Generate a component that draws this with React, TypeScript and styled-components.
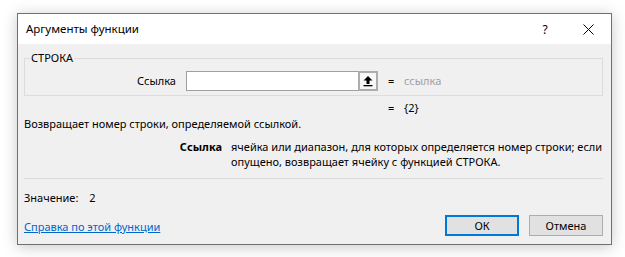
import styled, { createGlobalStyle } from "styled-components";

const GlobalStyle = createGlobalStyle`
    html, body {
        margin: 0;
        padding: 0;
        background: #ffffff;
    }
    body {
        font-family: "Noto Sans", "Liberation Sans", sans-serif;
        font-size: 11px;
        color: #000000;
    }
`;

const Page = styled.div`
    padding: 13px 0 0 17px;
    width: 625px;
    height: 257px;
    box-sizing: border-box;
`;

const Dialog = styled.div`
    width: 595px;
    height: 232px;
    box-sizing: border-box;
    border: 1px solid #707070;
    background: #f0f0f0;
    box-shadow: 0 2px 14px rgba(0, 0, 0, 0.22);
    display: flex;
    flex-direction: column;
`;

const TitleBar = styled.div`
    height: 30px;
    background: #ffffff;
    display: flex;
    align-items: center;
    padding-left: 8px;
`;

const Title = styled.div`
    flex: 1;
    font-size: 11.5px;
    line-height: 16px;
`;

const TitleButton = styled.div<{ $width: number }>`
    width: ${(p) => p.$width}px;
    height: 30px;
    font-size: 12px;
    display: flex;
    align-items: center;
    justify-content: center;
`;

const Body = styled.div`
    flex: 1;
    padding: 6px 8px 0 6px;
    display: flex;
    flex-direction: column;
`;

const Group = styled.fieldset`
    margin: 0;
    padding: 5px 0 4px 0;
    border: 1px solid #dcdcdc;
    min-width: 0;
`;

const Legend = styled.legend`
    padding: 0 1px;
    margin-left: 5px;
    line-height: 16px;
`;

const ArgGrid = styled.div<{ $first: number }>`
    display: grid;
    grid-template-columns: ${(p) => p.$first}px 192px 6px 1fr;
    column-gap: 10px;
    align-items: center;
    line-height: 16px;
`;

const ArgLabel = styled.div`
    text-align: right;
`;

const InputBox = styled.div`
    height: 20px;
    box-sizing: border-box;
    border: 1px solid #a0a0a0;
    background: #ffffff;
    display: flex;
    justify-content: flex-end;
`;

const PickButton = styled.div`
    width: 20px;
    height: 20px;
    margin: -1px -1px -1px 0;
    box-sizing: border-box;
    border: 2px solid #adadad;
    background: #f7f7f7;
    display: flex;
    align-items: center;
    justify-content: center;
`;

const Value = styled.div<{ $muted?: boolean }>`
    color: ${(p) => (p.$muted ? "#a0a0a0" : "#000000")};
    white-space: nowrap;
`;

const ResultRow = styled(ArgGrid)`
    margin-top: 4px;
`;

const Description = styled.div`
    line-height: 16px;
`;

const HelpGrid = styled.div`
    margin-top: 7px;
    display: grid;
    grid-template-columns: 198px 1fr;
    column-gap: 9px;
    line-height: 15px;
`;

const HelpName = styled.div`
    text-align: right;
    font-weight: bold;
`;

const HelpText = styled.div`
    white-space: nowrap;
`;

const Separator = styled.hr`
    margin: 9px 0 0 0;
    border: 0;
    border-top: 1px solid #dcdcdc;
    height: 0;
`;

const ResultLine = styled.div`
    margin-top: 11px;
    line-height: 16px;
    display: flex;
    gap: 11px;
`;

const Footer = styled.div`
    margin-top: 9px;
    display: flex;
    align-items: center;
`;

const HelpLink = styled.a`
    flex: 1;
    color: #0066cc;
    text-decoration: underline;
    line-height: 16px;
    padding-top: 3px;
`;

const Button = styled.div<{ $default?: boolean }>`
    width: 74px;
    height: 21px;
    box-sizing: border-box;
    border: ${(p) => (p.$default ? "2px solid #0078d7" : "1px solid #adadad")};
    background: #e1e1e1;
    display: flex;
    align-items: center;
    justify-content: center;
    line-height: 16px;
    & + & {
        margin-left: 10px;
    }
`;

const UpArrow = () => (
    <svg width="10" height="12" viewBox="0 0 10 12">
        <path d="M5 1 L9.5 5.5 L6.5 5.5 L6.5 9 L3.5 9 L3.5 5.5 L0.5 5.5 Z" fill="#000" />
        <rect x="0.5" y="10" width="9" height="1.3" fill="#000" />
    </svg>
);

const CloseIcon = () => (
    <svg width="11" height="11" viewBox="0 0 11 11">
        <path d="M0.5 0.5 L10.5 10.5 M10.5 0.5 L0.5 10.5" stroke="#000" strokeWidth="1" />
    </svg>
);

export default function App() {
    return (
        <>
            <GlobalStyle />
            <Page>
                <Dialog>
                    <TitleBar>
                        <Title>Аргументы функции</Title>
                        <TitleButton $width={40}>?</TitleButton>
                        <TitleButton $width={46}>
                            <CloseIcon />
                        </TitleButton>
                    </TitleBar>
                    <Body>
                        <Group>
                            <Legend>СТРОКА</Legend>
                            <ArgGrid $first={151}>
                                <ArgLabel>Ссылка</ArgLabel>
                                <InputBox>
                                    <PickButton>
                                        <UpArrow />
                                    </PickButton>
                                </InputBox>
                                <Value>=</Value>
                                <Value $muted>ссылка</Value>
                            </ArgGrid>
                        </Group>
                        <ResultRow $first={152}>
                            <div />
                            <div />
                            <Value>=</Value>
                            <Value>{"{2}"}</Value>
                        </ResultRow>
                        <Description>Возвращает номер строки, определяемой ссылкой.</Description>
                        <HelpGrid>
                            <HelpName>Ссылка</HelpName>
                            <HelpText>
                                ячейка или диапазон, для которых определяется номер строки; если
                                <br />
                                опущено, возвращает ячейку с функцией СТРОКА.
                            </HelpText>
                        </HelpGrid>
                        <Separator />
                        <ResultLine>
                            <span>Значение:</span>
                            <span>2</span>
                        </ResultLine>
                        <Footer>
                            <HelpLink href="#">Справка по этой функции</HelpLink>
                            <Button $default>ОК</Button>
                            <Button>Отмена</Button>
                        </Footer>
                    </Body>
                </Dialog>
            </Page>
        </>
    );
}
